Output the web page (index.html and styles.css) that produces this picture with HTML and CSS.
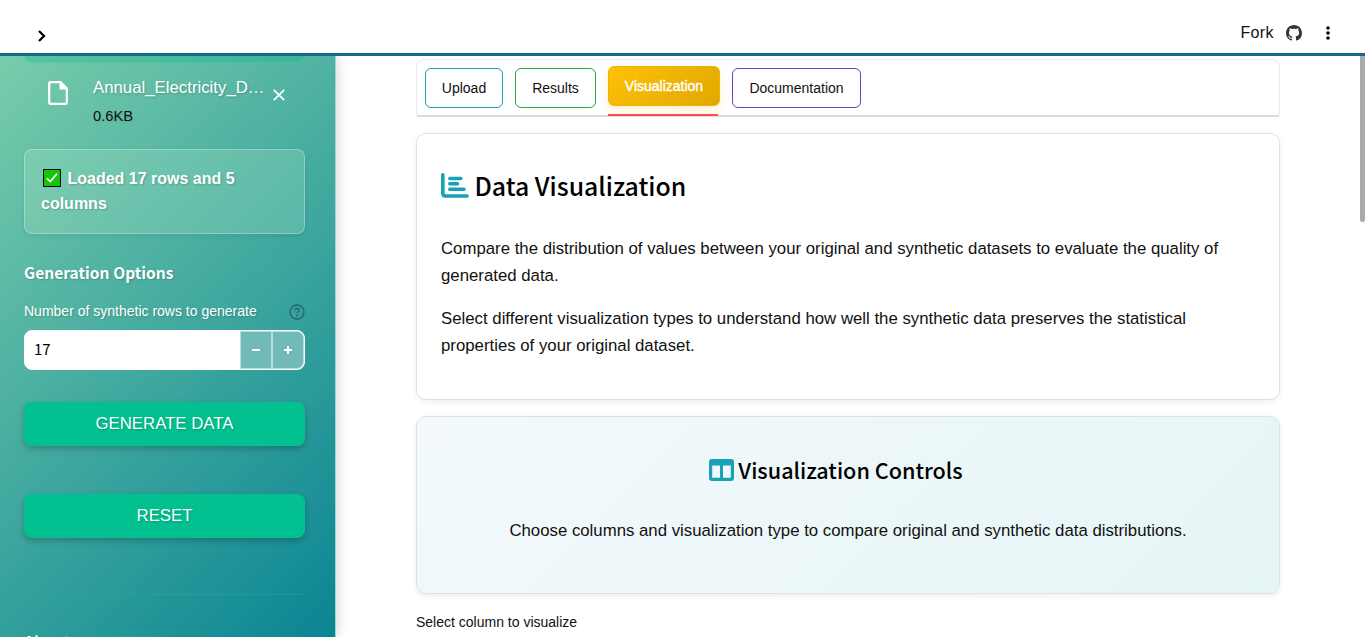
FILE: index.html
```html
<!DOCTYPE html>
<html lang="en">
<head>
<meta charset="utf-8">
<title>Data Visualization</title>
<link rel="stylesheet" href="styles.css">
</head>
<body>
<header class="topbar">
  <svg class="chevron" viewBox="0 0 10 14" width="10" height="14"><path d="M2 2l5 5-5 5" fill="none" stroke="#000" stroke-width="2.2"/></svg>
  <div class="top-actions">
    <span class="fork">Fork</span>
    <svg class="github" viewBox="0 0 16 16" width="16" height="16"><path fill="#31333f" d="M8 0C3.58 0 0 3.58 0 8c0 3.54 2.29 6.53 5.47 7.59.4.07.55-.17.55-.38 0-.19-.01-.82-.01-1.49-2.01.37-2.53-.49-2.69-.94-.09-.23-.48-.94-.82-1.13-.28-.15-.68-.52-.01-.53.63-.01 1.08.58 1.23.82.72 1.21 1.87.87 2.33.66.07-.52.28-.87.51-1.07-1.78-.2-3.64-.89-3.64-3.95 0-.87.31-1.59.82-2.15-.08-.2-.36-1.02.08-2.12 0 0 .67-.21 2.2.82.64-.18 1.32-.27 2-.27s1.36.09 2 .27c1.53-1.04 2.2-.82 2.2-.82.44 1.1.16 1.92.08 2.12.51.56.82 1.27.82 2.15 0 3.07-1.87 3.75-3.65 3.95.29.25.54.73.54 1.48 0 1.07-.01 1.93-.01 2.2 0 .21.15.46.55.38A8.01 8.01 0 0 0 16 8c0-4.42-3.58-8-8-8z"/></svg>
    <svg viewBox="0 0 4 14" width="4" height="14"><circle cx="2" cy="2" r="1.8"/><circle cx="2" cy="7" r="1.8"/><circle cx="2" cy="12" r="1.8"/></svg>
  </div>
</header>
<div class="layout">
  <aside class="sidebar">
    <div class="dropzone"></div>
    <div class="file">
      <svg class="file-icon" viewBox="0 0 20 24" width="20" height="24"><path d="M3 1.2h9.5L18.8 7.500V21.500q0 1.300-1.300 1.300H2.500q-1.300 0-1.300-1.300V2.500Q1.200 1.200 2.500 1.200z" fill="none" stroke="#fff" stroke-width="2.200"/><path d="M11.500 1v7.500H19z" fill="#fff"/></svg>
      <div class="file-text"><div class="file-name">Annual_Electricity_D…</div><div class="file-size">0.6KB</div></div>
      <svg class="close" viewBox="0 0 12 12" width="12" height="12"><path d="M.8.8l10.400 10.400M11.200.8L.8 11.200" stroke="#fff" stroke-width="1.700"/></svg>
    </div>
    <div class="notice"><svg class="check" viewBox="0 0 18 18" width="18" height="18"><path d="M.5.5h17v17H.5z" fill="#16c60c" stroke="#000"/><path d="M4 9.300l3.200 3.200L14 4.800" fill="none" stroke="#fff" stroke-width="1.700"/></svg>Loaded 17 rows and 5<br>columns</div>
    <h3 class="side-title">Generation Options</h3>
    <div class="field-label"><span>Number of synthetic rows to generate</span>
      <svg viewBox="0 0 16 16" width="16" height="16"><circle cx="8" cy="8" r="7" fill="none" stroke="#27666d" stroke-width="1.300"/><path d="M5.900 6.300Q6 4.500 8 4.500t2.100 1.700Q10.100 7.200 9 7.800q-1 .6-1 1.500" fill="none" stroke="#27666d" stroke-width="1.300"/><circle cx="8" cy="11.400" r=".9" fill="#27666d"/></svg>
    </div>
    <div class="number"><span class="value">17</span>
      <span class="step"><svg viewBox="0 0 8 8" width="8" height="8"><path d="M0 4h8" stroke="#fff" stroke-width="2"/></svg></span>
      <span class="step last"><svg viewBox="0 0 8 8" width="8" height="8"><path d="M0 4h8M4 0v8" stroke="#fff" stroke-width="2"/></svg></span>
    </div>
    <div class="button">GENERATE DATA</div>
    <div class="button reset">RESET</div>
    <div class="rule"></div>
    <h3 class="side-title about">About</h3>
  </aside>
  <main class="main">
    <nav class="tabs">
      <div class="tab upload">Upload</div>
      <div class="tab results">Results</div>
      <div class="tab active">Visualization</div>
      <div class="tab docs">Documentation</div>
    </nav>
    <section class="card intro">
      <h2 class="title"><svg viewBox="0 0 28 25" width="28" height="25"><g fill="none" stroke="#17a2b8" stroke-linecap="round"><path d="M1.800 1.800v18.400q0 2.800 2.800 2.800h21.500" stroke-width="3.600"/><path d="M8.800 5.500h11M8.800 10.800h7.800M8.800 16.200H23" stroke-width="3.500"/></g></svg><span>Data Visualization</span></h2>
      <p class="first">Compare the distribution of values between your original and synthetic datasets to evaluate the quality of<br>generated data.</p>
      <p>Select different visualization types to understand how well the synthetic data preserves the statistical<br>properties of your original dataset.</p>
    </section>
    <section class="card controls">
      <h3 class="title small"><svg viewBox="0 0 25 22" width="25" height="22"><path fill="#17a2b8" fill-rule="evenodd" d="M3 0h19q3 0 3 3v16q0 3-3 3H3q-3 0-3-3V3Q0 0 3 0zM3.200 6.500V18.700H11V6.500zM14 6.500V18.700h7.800V6.500z"/></svg><span>Visualization Controls</span></h3>
      <p>Choose columns and visualization type to compare original and synthetic data distributions.</p>
    </section>
    <div class="select-label">Select column to visualize</div>
  </main>
  <div class="scroll-thumb"></div>
</div>
</body>
</html>
```

FILE: styles.css
```css
* { box-sizing: border-box; }
body { margin: 0; height: 637px; overflow: hidden; background: #fff; color: #111; font-family: "Liberation Sans", Arial, sans-serif; }
svg { display: block; flex: none; }
h2, h3, p { margin: 0; }
.topbar { height: 56px; border-bottom: 3px solid #156a8c; display: flex; justify-content: space-between; padding: 0 35px 0 37px; }
.chevron { margin-top: 29px; }
.top-actions { display: flex; align-items: center; height: 66px; }
.fork { font-size: 16px; letter-spacing: .4px; margin-right: 12px; }
.github { margin-right: 24px; }
.layout { display: flex; height: 581px; overflow: hidden; }
.sidebar { width: 336px; flex: none; height: 581px; overflow: hidden; padding: 0 30px 0 24px; background: linear-gradient(135deg, #78ccab 0%, #0a8593 100%); border-right: 1px solid #a5d3d2; box-shadow: 0 0 12px rgba(0,0,0,.2); color: #fff; text-shadow: 1px 1px 2px rgba(0,0,0,.2); }
.dropzone { height: 7px; background: rgba(2,180,130,.28); border: 1px solid rgba(100,215,180,.35); border-top: 0; border-radius: 0 0 10px 10px / 0 0 7px 7px; }
.file { display: flex; height: 86px; padding-left: 24px; }
.file-icon { margin-top: 18px; margin-right: 25px; }
.file-text { width: 180px; white-space: nowrap; }
.file-name { font-size: 16.800px; line-height: 24px; margin-top: 13px; }
.file-size { font-size: 14.700px; line-height: 20px; margin-top: 6px; color: #111; text-shadow: 1px 1px 2px rgba(0,0,0,.1); }
.close { margin-top: 26px; }
.notice { height: 85px; border: 1px solid rgba(255,255,255,.3); border-radius: 8px; background: rgba(190,240,205,.22); padding: 16px; font-size: 16px; font-weight: 700; line-height: 25px; box-shadow: 0 2px 5px rgba(0,0,0,.08); white-space: nowrap; }
.check { display: inline-block; vertical-align: -3px; margin: 0 6.500px 0 2px; }
.side-title { font-family: "Noto Sans CJK SC", sans-serif; font-size: 15.600px; line-height: 24px; font-weight: 700; margin-top: 26px; white-space: nowrap; }
.field-label { display: flex; justify-content: space-between; align-items: center; height: 20px; margin-top: 17px; font-size: 14px; white-space: nowrap; }
.field-label svg { margin-top: 2px; }
.number { display: flex; align-items: center; height: 40px; margin-top: 9px; border: 1px solid #fff; border-radius: 8px; background: #fff; color: #000; text-shadow: none; overflow: hidden; }
.value { flex: 1; padding-left: 9px; font-family: "Noto Sans CJK SC", sans-serif; font-size: 15px; line-height: 22px; margin-top: -2px; }
.step { display: flex; align-items: center; justify-content: center; width: 32px; height: 38px; background: #72bab8; border: 1px solid #b5dcdb; }
.last { border-radius: 0 7px 7px 0; }
.button { height: 44px; margin-top: 32px; border-radius: 8px; background: #02c08f; text-align: center; font-size: 16.800px; line-height: 43px; box-shadow: 0 3px 6px rgba(0,0,0,.22); }
.reset { margin-top: 48px; }
.rule { height: 1px; margin-top: 56px; background: rgba(2,195,140,.4); }
.about { margin-top: 34px; }
.main { width: 864px; margin-left: 80px; flex: none; padding-top: 3px; }
.tabs { display: flex; gap: 12px; height: 58px; padding: 8px; border: 1px solid #e9ebef; border-bottom: 2px solid #d9dae0; border-radius: 8px 8px 3px 3px; }
.tab { position: relative; height: 40px; border: 1px solid; border-radius: 6px; font-size: 14px; line-height: 38px; text-align: center; white-space: nowrap; color: #111; }
.upload { width: 78px; border-color: #17a2b8; }
.results { width: 81px; border-color: #28a745; }
.active { width: 112px; top: -2px; border-color: #f0b400; background: linear-gradient(135deg, #ffc107, #e0a800); color: #fff; -webkit-text-stroke: .4px #fff; box-shadow: 0 4px 8px rgba(255,193,7,.22); }
.active::after { content: ""; position: absolute; left: -1px; top: 47px; width: 110px; height: 2px; background: #ff4b4b; }
.docs { width: 129px; border-color: #6f42c1; }
.card { border: 1px solid #dbe2e7; border-radius: 10px; box-shadow: 0 2px 6px rgba(0,0,0,.07); }
.intro { height: 267px; margin-top: 16px; padding: 33px 24px; }
.title { font-family: "Noto Sans CJK SC", sans-serif; font-weight: 500; display: flex; align-items: center; color: #000; white-space: nowrap; font-size: 24.850px; line-height: 36px; gap: 5.500px; }
.card p { font-size: 16.800px; line-height: 27px; white-space: nowrap; }
.card p.first { margin: 32px 0 16px; }
.controls { height: 178px; margin-top: 16px; padding: 35px 24px; background: linear-gradient(135deg, #f3f9fc, #e6f5f5); text-align: center; }
.title.small { justify-content: center; font-size: 21.600px; gap: 4px; padding-right: 24px; }
.controls p { margin-top: 29px; }
.select-label { margin-top: 18px; font-size: 14px; line-height: 20px; }
.scroll-thumb { margin-left: auto; width: 5px; height: 166px; background: #a9a9b0; border-radius: 0 0 3px 3px; }
```
